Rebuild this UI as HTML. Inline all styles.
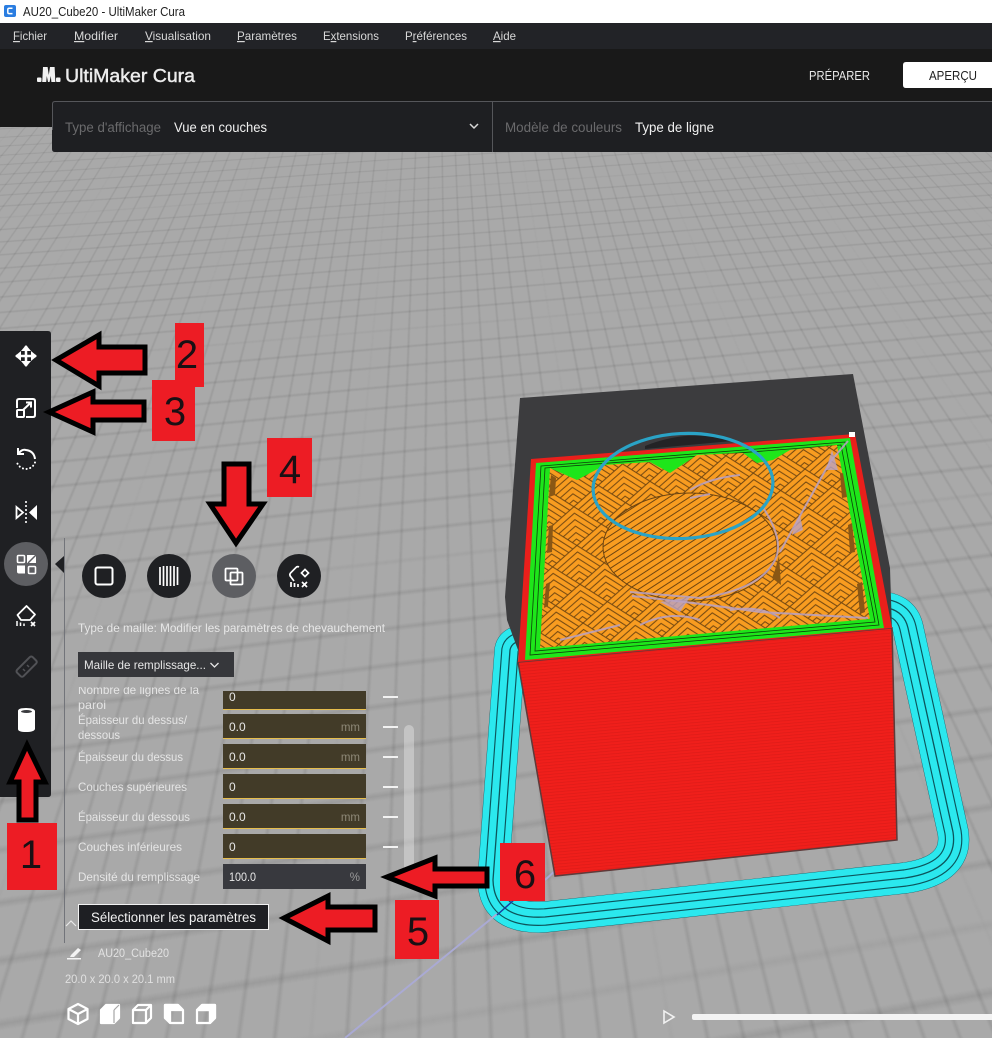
<!DOCTYPE html>
<html lang="fr"><head><meta charset="utf-8"><title>AU20_Cube20 - UltiMaker Cura</title>
<style>
html,body{margin:0;padding:0;background:#a8a8a8;width:992px;height:1038px;overflow:hidden}
#view{position:absolute;left:0;top:127px;width:992px;height:911px;overflow:hidden;perspective:620px;perspective-origin:50% -160px;background:#a9a9a9}
#plane{position:absolute;left:-1600px;top:-100px;width:4200px;height:3000px;transform-origin:50% 0;transform:rotateX(62deg) rotateZ(-5deg);
background-image:linear-gradient(90deg,rgba(255,255,255,.1) 1px,transparent 1px),linear-gradient(rgba(255,255,255,.07) 1px,transparent 1px),linear-gradient(rgba(80,80,80,.15) 1px,transparent 1px),linear-gradient(90deg,rgba(80,80,80,.15) 1px,transparent 1px);background-size:100px 100px,100px 100px,10px 10px,10px 10px}
svg{position:absolute;left:0;top:0}
text{font-family:"Liberation Sans",sans-serif}
</style></head><body>
<div id="view"><div id="plane"></div></div>
<svg width="992" height="1038" viewBox="0 0 992 1038" xmlns="http://www.w3.org/2000/svg">
<defs>
<g id="ch" fill="none" stroke="#6d4410" stroke-width=".95"><path d="M0 18L24 0L48 18M4 21L24 6L44 21M8 24L24 12L40 24M12 27L24 18L36 27M16 30L24 24L32 30M20 33L24 30L28 33"/></g>
<pattern id="herr" width="48" height="36" patternUnits="userSpaceOnUse" patternTransform="translate(545 470) rotate(-4.5) scale(1.08)">
<rect width="48" height="36" fill="#f89c20"/>
<use href="#ch"/><use href="#ch" x="-24" y="-18"/><use href="#ch" x="24" y="-18"/><use href="#ch" x="-24" y="18"/><use href="#ch" x="24" y="18"/>
</pattern>
<pattern id="diag" width="5.500" height="5.500" patternUnits="userSpaceOnUse" patternTransform="rotate(-33)">
<rect width="5.500" height="5.500" fill="#f89c20"/><rect width="5.500" height="1" fill="#6d4410"/>
</pattern>
<pattern id="redp" width="4" height="3" patternUnits="userSpaceOnUse" patternTransform="rotate(-5)">
<rect width="4" height="3" fill="#f01f1b"/><rect width="4" height=".7" fill="#dc1b18"/>
</pattern>
<clipPath id="cl"><rect x="70" y="687" width="140" height="40"/></clipPath>
</defs>

<!-- top chrome -->
<rect x="0" y="0" width="992" height="23" fill="#fff"/>
<rect x="0" y="23" width="992" height="26" fill="#222327"/>
<rect x="0" y="49" width="992" height="78" fill="#191919"/>
<rect x="4" y="5" width="12" height="12" rx="2" fill="#2a7de1"/>
<path d="M12.500 8.300H9.200Q7.800 8.300 7.800 9.700V12.200Q7.800 13.600 9.200 13.600H12.500" fill="none" stroke="#fff" stroke-width="1.500"/>
<text x="23" y="16" font-size="12.500" fill="#222" textLength="162" lengthAdjust="spacingAndGlyphs">AU20_Cube20 - UltiMaker Cura</text>
<g font-size="12" fill="#d8d8d8">
<text x="13" y="40" textLength="34" lengthAdjust="spacingAndGlyphs"><tspan text-decoration="underline">F</tspan>ichier</text>
<text x="74" y="40" textLength="44" lengthAdjust="spacingAndGlyphs"><tspan text-decoration="underline">M</tspan>odifier</text>
<text x="145" y="40" textLength="66" lengthAdjust="spacingAndGlyphs"><tspan text-decoration="underline">V</tspan>isualisation</text>
<text x="237" y="40" textLength="60" lengthAdjust="spacingAndGlyphs"><tspan text-decoration="underline">P</tspan>aramètres</text>
<text x="323" y="40" textLength="56" lengthAdjust="spacingAndGlyphs">E<tspan text-decoration="underline">x</tspan>tensions</text>
<text x="405" y="40" textLength="62" lengthAdjust="spacingAndGlyphs">P<tspan text-decoration="underline">r</tspan>éférences</text>
<text x="493" y="40" textLength="23" lengthAdjust="spacingAndGlyphs"><tspan text-decoration="underline">A</tspan>ide</text>
</g>
<!-- logo -->
<g fill="#f2f2f2"><rect x="37" y="77.500" width="4.500" height="4.500" rx="1"/><rect x="56" y="77.500" width="4.500" height="4.500" rx="1"/>
<path d="M43 67h4.600l1.200 8 1.200-8h4.600l.8 15h-4l-.6-6-1.200 6h-1.600l-1.200-6-.6 6h-4z"/></g>
<text x="65" y="82" font-size="18.500" fill="#ececec" stroke="#ececec" stroke-width=".45" textLength="130" lengthAdjust="spacingAndGlyphs">UltiMaker Cura</text>
<text x="809" y="80" font-size="12.500" fill="#e8e8e8" textLength="61" lengthAdjust="spacingAndGlyphs">PRÉPARER</text>
<path d="M906 62H992V88H906Q903 88 903 85V65Q903 62 906 62Z" fill="#fff"/>
<text x="929" y="80" font-size="12.500" fill="#222" textLength="48" lengthAdjust="spacingAndGlyphs">APERÇU</text>

<!-- display panel -->
<path d="M55 101H992V152H55Q52 152 52 149V104Q52 101 55 101Z" fill="#1e1f22"/>
<path d="M52.500 130V104Q52.500 101.500 55 101.500H992" fill="none" stroke="#55565a"/>
<rect x="492" y="101" width="1" height="51" fill="#55565a"/>
<text x="65" y="132" font-size="13.500" fill="#6a6a6c" textLength="96" lengthAdjust="spacingAndGlyphs">Type d'affichage</text>
<text x="174" y="132" font-size="13.500" fill="#f0f0f0" textLength="93" lengthAdjust="spacingAndGlyphs">Vue en couches</text>
<path d="M470 124l4 4 4-4" fill="none" stroke="#d8d8d8" stroke-width="1.500"/>
<text x="505" y="132" font-size="13.500" fill="#6a6a6c" textLength="117" lengthAdjust="spacingAndGlyphs">Modèle de couleurs</text>
<text x="635" y="132" font-size="13.500" fill="#f0f0f0" textLength="79" lengthAdjust="spacingAndGlyphs">Type de ligne</text>

<!-- skirt -->
<g fill="none" stroke-linejoin="round">
<path d="M875 607Q903 606 908 628L953 832Q959 870 905 878L545 917Q494 920 493 880L510 650Q512 640 528 640" stroke="#0c555c" stroke-width="31.200"/>
<path d="M875 607Q903 606 908 628L953 832Q959 870 905 878L545 917Q494 920 493 880L510 650Q512 640 528 640" stroke="#2be8ee" stroke-width="30.500"/>
<path d="M875 607Q903 606 908 628L953 832Q959 870 905 878L545 917Q494 920 493 880L510 650Q512 640 528 640" stroke="#0c555c" stroke-width="17.500"/>
<path d="M875 607Q903 606 908 628L953 832Q959 870 905 878L545 917Q494 920 493 880L510 650Q512 640 528 640" stroke="#2be8ee" stroke-width="15.200"/>
<path d="M875 607Q903 606 908 628L953 832Q959 870 905 878L545 917Q494 920 493 880L510 650Q512 640 528 640" stroke="#0c555c" stroke-width="1.300"/>
</g>
<path d="M497 914L345 1038" stroke="#aaaad4" stroke-width="2" fill="none"/>
<path d="M497 915L515 899" stroke="#1540a0" stroke-width="1.500" fill="none"/>
<path d="M545 880L556 870" stroke="#aaaad4" stroke-width="2" fill="none"/>

<!-- model -->
<polygon points="520,398 853,374 890,568 892,630 518,650 507,620 505,597" fill="#3c3c3e"/>
<polygon points="518,662 892,628 897,840 555,876" fill="url(#redp)" stroke="#5e3a3a" stroke-width="1.500"/>
<polygon points="531,459 855,434 892,628 518,662" fill="#ea1f1b"/>
<polygon points="536,463 850,438 884,628 525,660" fill="#1ee61a"/>
<polygon points="541,466 845,442 879,625 530,655" fill="#1ee61a" stroke="#0d3d0a" stroke-width=".8"/>
<polygon points="545,468 841,445 875,622 535,651" fill="#1ee61a" stroke="#0d3d0a" stroke-width=".8"/>
<polygon points="550,468 577,480 605,465 650,462 670,473 697,455 743,453 757,463 773,460 790,450 837,445 870,619 540,648" fill="url(#herr)"/>
<g fill="#8a5714">
<polygon points="551,475 556,478 555,495 549,497"/><polygon points="549,526 553,525 552,552 547,553"/><polygon points="546,584 550,582 548,606 544,608"/>
<polygon points="840,474 843,473 847,497 842,498"/><polygon points="848,525 852,523 855,552 850,553"/><polygon points="857,584 862,582 865,612 860,614"/>
<polygon points="775,570 779,556 781,585 772,578"/>
</g>
<ellipse cx="690" cy="547" rx="87" ry="54" fill="url(#diag)" stroke="#6d4410" stroke-width="1"/>
<path d="M645 446Q690 428 732 441L645 449Z" fill="#232325"/>
<!-- travel lines -->
<g fill="none" stroke="#b9a2c6" stroke-width="2" opacity=".85">
<path d="M848 441L830 462L806 505L780 552"/>
<path d="M762 506Q785 540 775 560Q760 590 700 598L630 592"/>
<path d="M632 596Q690 602 760 612L868 618"/>
<path d="M560 640Q600 630 620 625M640 625Q670 610 700 620M730 610Q760 605 780 618"/>
<path d="M690 490Q710 478 740 475M690 498L710 494"/>
</g>
<g fill="#b9a2c6" opacity=".8">
<polygon points="832,450 838,470 826,470"/><polygon points="795,525 800,515 803,530 792,535"/>
<polygon points="660,602 690,597 680,612"/>
</g>
<ellipse cx="683" cy="486" rx="90" ry="52.500" transform="rotate(-3 683 486)" fill="none" stroke="#2aa3c6" stroke-width="3.200"/>
<rect x="849" y="432" width="6" height="5" fill="#fff"/>

<!-- left toolbar -->
<path d="M0 331H48Q51 331 51 334V794Q51 797 48 797H0Z" fill="#1f2023"/>
<circle cx="26" cy="564" r="22" fill="#5d5e62"/>
<!-- move -->
<g fill="#fff"><path d="M16 356h20M26 346v20" stroke="#fff" stroke-width="2.500"/>
<polygon points="26,345 21,351 31,351"/><polygon points="26,367 21,361 31,361"/><polygon points="15,356 21,351 21,361"/><polygon points="37,356 31,351 31,361"/></g>
<!-- scale -->
<g fill="none" stroke="#fff" stroke-width="2"><path d="M17 408V401Q17 399 19 399H33Q35 399 35 401V415Q35 417 33 417H26"/><rect x="17" y="410" width="7" height="7" rx="1"/><path d="M23 410L31 402.500M26 402.500H31V407.500"/></g>
<!-- rotate -->
<g fill="none" stroke="#fff" stroke-width="2"><path d="M19 453Q22 449 26 450Q34 451 35 459"/><path d="M18 448V454H24"/><path d="M35 462.500A9.500 9.500 0 0 1 17 462.500" stroke-dasharray=".1 3.600" stroke-linecap="round"/></g>
<!-- mirror -->
<g><path d="M26 501V524" stroke="#fff" stroke-width="1.600" stroke-dasharray="2 2"/><path d="M16.500 507L23 512.500L16.500 518Z" fill="none" stroke="#fff" stroke-width="1.800"/><polygon points="37,505 37,520 29,512.500" fill="#fff"/></g>
<!-- per model -->
<g><rect x="17.500" y="555.500" width="7" height="7" rx="1" fill="none" stroke="#fff" stroke-width="1.600"/><path d="M27 555h9v8h-9z" fill="#fff"/><path d="M28 563l8-8" stroke="#5d5e62" stroke-width="1.500"/><path d="M17 565.500h8v8h-6q-2 0-2-2z" fill="#fff"/><rect x="28.500" y="566.500" width="7" height="7" rx="1" fill="none" stroke="#fff" stroke-width="1.600"/></g>
<!-- support blocker -->
<g fill="none" stroke="#fff" stroke-width="1.800"><path d="M26.500 606L35 614.500L30 620H21L17.500 615Z" stroke-linejoin="round"/><path d="M17 621V626M20.500 622.500V626M24 623.500V626" stroke-width="1.500"/><path d="M31 622l4 4m0-4l-4 4" stroke-width="1.700"/></g>
<!-- measure -->
<g fill="none" stroke="#515256" stroke-width="2"><rect x="16" y="662" width="22" height="9" rx="2" transform="rotate(-45 27 667)"/><path d="M23 669l2 2M27 665l2 2" stroke-width="1.500"/></g>
<!-- cylinder -->
<path d="M18 711Q18 708 26 708Q34 708 35 711V729Q34 732 26 732Q18 732 18 729Z" fill="#fff"/><ellipse cx="26.500" cy="711.500" rx="5.500" ry="1.500" fill="#3a3b3e"/>

<!-- side panel -->
<rect x="64" y="538" width="1" height="405" fill="#72747a"/>
<polygon points="64,556 55,564 64,573" fill="#1f2023"/>
<circle cx="104" cy="576" r="22" fill="#1f2023"/><circle cx="169" cy="576" r="22" fill="#1f2023"/><circle cx="234" cy="576" r="22" fill="#5d5e62"/><circle cx="299" cy="576" r="22" fill="#1f2023"/>
<rect x="95.500" y="567.500" width="17" height="17" rx="2" fill="none" stroke="#fff" stroke-width="2"/>
<path d="M160 567V585M163.500 566V586M167 566V586M170.500 566V586M174 566V586M177.500 567V585" stroke="#fff" stroke-width="1.700" fill="none"/>
<g fill="none" stroke="#fff" stroke-width="1.800"><rect x="225.500" y="568.500" width="12" height="12" rx="1"/><rect x="230.500" y="572.500" width="12" height="12" rx="1"/></g>
<g fill="none" stroke="#fff" stroke-width="1.700"><path d="M299 567Q297 566 295.500 568L290.500 573Q289 575 291 577L294 581"/><path d="M291 582V587M294.500 583V587M298 584V587"/><rect x="302.500" y="570.500" width="5" height="5" transform="rotate(45 305 573)"/><path d="M302 582l5 5m0-5l-5 5"/></g>

<text x="78" y="632" font-size="12" fill="#eeeeee" opacity=".9" textLength="307" lengthAdjust="spacingAndGlyphs">Type de maille: Modifier les paramètres de chevauchement</text>
<rect x="78" y="652" width="156" height="25" fill="#36373b"/>
<text x="84" y="669" font-size="12" fill="#e6e6e6" textLength="122" lengthAdjust="spacingAndGlyphs">Maille de remplissage...</text>
<path d="M210.500 663l4 4 4-4" fill="none" stroke="#e6e6e6" stroke-width="1.300"/>

<g fill="#423b28">
<rect x="223" y="691" width="143" height="19"/><rect x="223" y="714" width="143" height="25"/><rect x="223" y="744" width="143" height="25"/><rect x="223" y="774" width="143" height="25"/><rect x="223" y="804" width="143" height="25"/><rect x="223" y="834" width="143" height="25"/>
</g>
<g fill="#e6bd4c">
<rect x="223" y="709" width="143" height="1"/><rect x="223" y="738" width="143" height="1"/><rect x="223" y="768" width="143" height="1"/><rect x="223" y="798" width="143" height="1"/><rect x="223" y="828" width="143" height="1"/><rect x="223" y="858" width="143" height="1"/>
</g>
<rect x="223" y="864" width="143" height="25" fill="#38393e"/>
<g fill="#f2f2f2"><rect x="383" y="696" width="15" height="2"/><rect x="383" y="726" width="15" height="2"/><rect x="383" y="756" width="15" height="2"/><rect x="383" y="786" width="15" height="2"/><rect x="383" y="816" width="15" height="2"/><rect x="383" y="846" width="15" height="2"/></g>
<rect x="404" y="725" width="10" height="150" rx="5" fill="#fff" opacity=".32"/>

<g font-size="12" fill="#ececec" opacity=".9">
<text x="78" y="694" textLength="121" lengthAdjust="spacingAndGlyphs" clip-path="url(#cl)">Nombre de lignes de la</text>
<text x="78" y="709" textLength="28" lengthAdjust="spacingAndGlyphs">paroi</text>
<text x="78" y="724" textLength="109" lengthAdjust="spacingAndGlyphs">Épaisseur du dessus/</text>
<text x="78" y="739" textLength="42" lengthAdjust="spacingAndGlyphs">dessous</text>
<text x="78" y="761" textLength="105" lengthAdjust="spacingAndGlyphs">Épaisseur du dessus</text>
<text x="78" y="791" textLength="109" lengthAdjust="spacingAndGlyphs">Couches supérieures</text>
<text x="78" y="821" textLength="112" lengthAdjust="spacingAndGlyphs">Épaisseur du dessous</text>
<text x="78" y="851" textLength="104" lengthAdjust="spacingAndGlyphs">Couches inférieures</text>
<text x="78" y="881" textLength="122" lengthAdjust="spacingAndGlyphs">Densité du remplissage</text>
</g>
<g font-size="12" fill="#e8e8e8">
<text x="229" y="701">0</text><text x="229" y="731">0.0</text><text x="229" y="761">0.0</text><text x="229" y="791">0</text><text x="229" y="821">0.0</text><text x="229" y="851">0</text><text x="229" y="881" textLength="27" lengthAdjust="spacingAndGlyphs">100.0</text>
</g>
<g font-size="11.500" fill="#8d8877" text-anchor="end">
<text x="360" y="731">mm</text><text x="360" y="761">mm</text><text x="360" y="821">mm</text>
<text x="360" y="881" fill="#9a9a9a">%</text>
</g>
<path d="M66 926l5-5 5 5" fill="none" stroke="#e8e8e8" stroke-width="1.200"/>
<rect x="78.500" y="904.500" width="190" height="25" fill="#1e1f23" stroke="#f2f2f2" stroke-width="1"/>
<text x="91" y="922" font-size="13.500" fill="#f2f2f2" textLength="165" lengthAdjust="spacingAndGlyphs">Sélectionner les paramètres</text>

<path d="M71 955L78 948L81 950L74 957H70Z" fill="#f4f4f4"/><rect x="67" y="958" width="14" height="1.500" fill="#f4f4f4"/>
<text x="98" y="957" font-size="11.500" fill="#eaeaea" opacity=".88" textLength="71" lengthAdjust="spacingAndGlyphs">AU20_Cube20</text>
<text x="65" y="983" font-size="11.500" fill="#eaeaea" opacity=".85" textLength="110" lengthAdjust="spacingAndGlyphs">20.0 x 20.0 x 20.1 mm</text>

<!-- view cubes -->
<g fill="none" stroke="#fff" stroke-width="2.200" stroke-linejoin="round">
<path d="M78 1004L87.500 1009V1019L78 1024L68.500 1019V1009ZM68.500 1009L78 1014L87.500 1009M78 1014V1024"/>
<path d="M101 1010L106 1005H119V1018L114 1023H101Z" fill="#fff"/><path d="M114 1010L119 1005M114 1010V1023" stroke="#a5a5a5" stroke-width="1.200"/>
<path d="M133 1010H146V1023H133ZM133 1010L138 1005H151V1018L146 1023M146 1010L151 1005"/>
<path d="M165 1005H178L183 1010V1023H170L165 1018ZM170 1010H183M170 1010V1023" fill="none"/><path d="M165 1005H178L182 1009H170V1022L165 1018Z" fill="#fff"/>
<path d="M197 1010H210V1023H197ZM197 1010L202 1005H215V1018L210 1023" /><path d="M197 1010L202 1005H215V1018L210 1023V1010Z" fill="#fff"/>
</g>

<!-- play + slider -->
<path d="M664 1011L674 1017L664 1023Z" fill="none" stroke="#f2f2f2" stroke-width="1.600"/>
<rect x="692" y="1014" width="310" height="6" rx="2" fill="#f3f3f3"/>

<!-- annotation boxes -->
<g fill="#ed1c24">
<rect x="175" y="323" width="29" height="64"/><rect x="152" y="380" width="43" height="61"/><rect x="267" y="438" width="45" height="59"/>
<rect x="7" y="823" width="50" height="67"/><rect x="395" y="900" width="44" height="59"/><rect x="500" y="843" width="45" height="58"/>
</g>
<g font-size="40" fill="#1a1014" text-anchor="middle">
<text x="187" y="368">2</text><text x="175" y="425">3</text><text x="290" y="483">4</text><text x="31" y="868">1</text><text x="418" y="945">5</text><text x="525" y="888">6</text>
</g>
<!-- arrows -->
<g fill="#ed1c24" stroke="#000" stroke-width="5" stroke-linejoin="miter">
<polygon points="56,360 99,335 99,347 145,347 145,373 99,373 99,386"/>
<polygon points="49,412 93,392 93,402 144,402 144,420 93,420 93,432"/>
<polygon points="236,543 210,504 224,504 224,464 249,464 249,504 263,504"/>
<polygon points="27,745 10,782 19,782 19,820 36,820 36,782 45,782"/>
<polygon points="387,877 435,858 435,869 487,869 487,886 435,886 435,896"/>
<polygon points="284,918 328,896 328,907 375,907 375,930 328,930 328,941"/>
</g>
</svg>
</body></html>
